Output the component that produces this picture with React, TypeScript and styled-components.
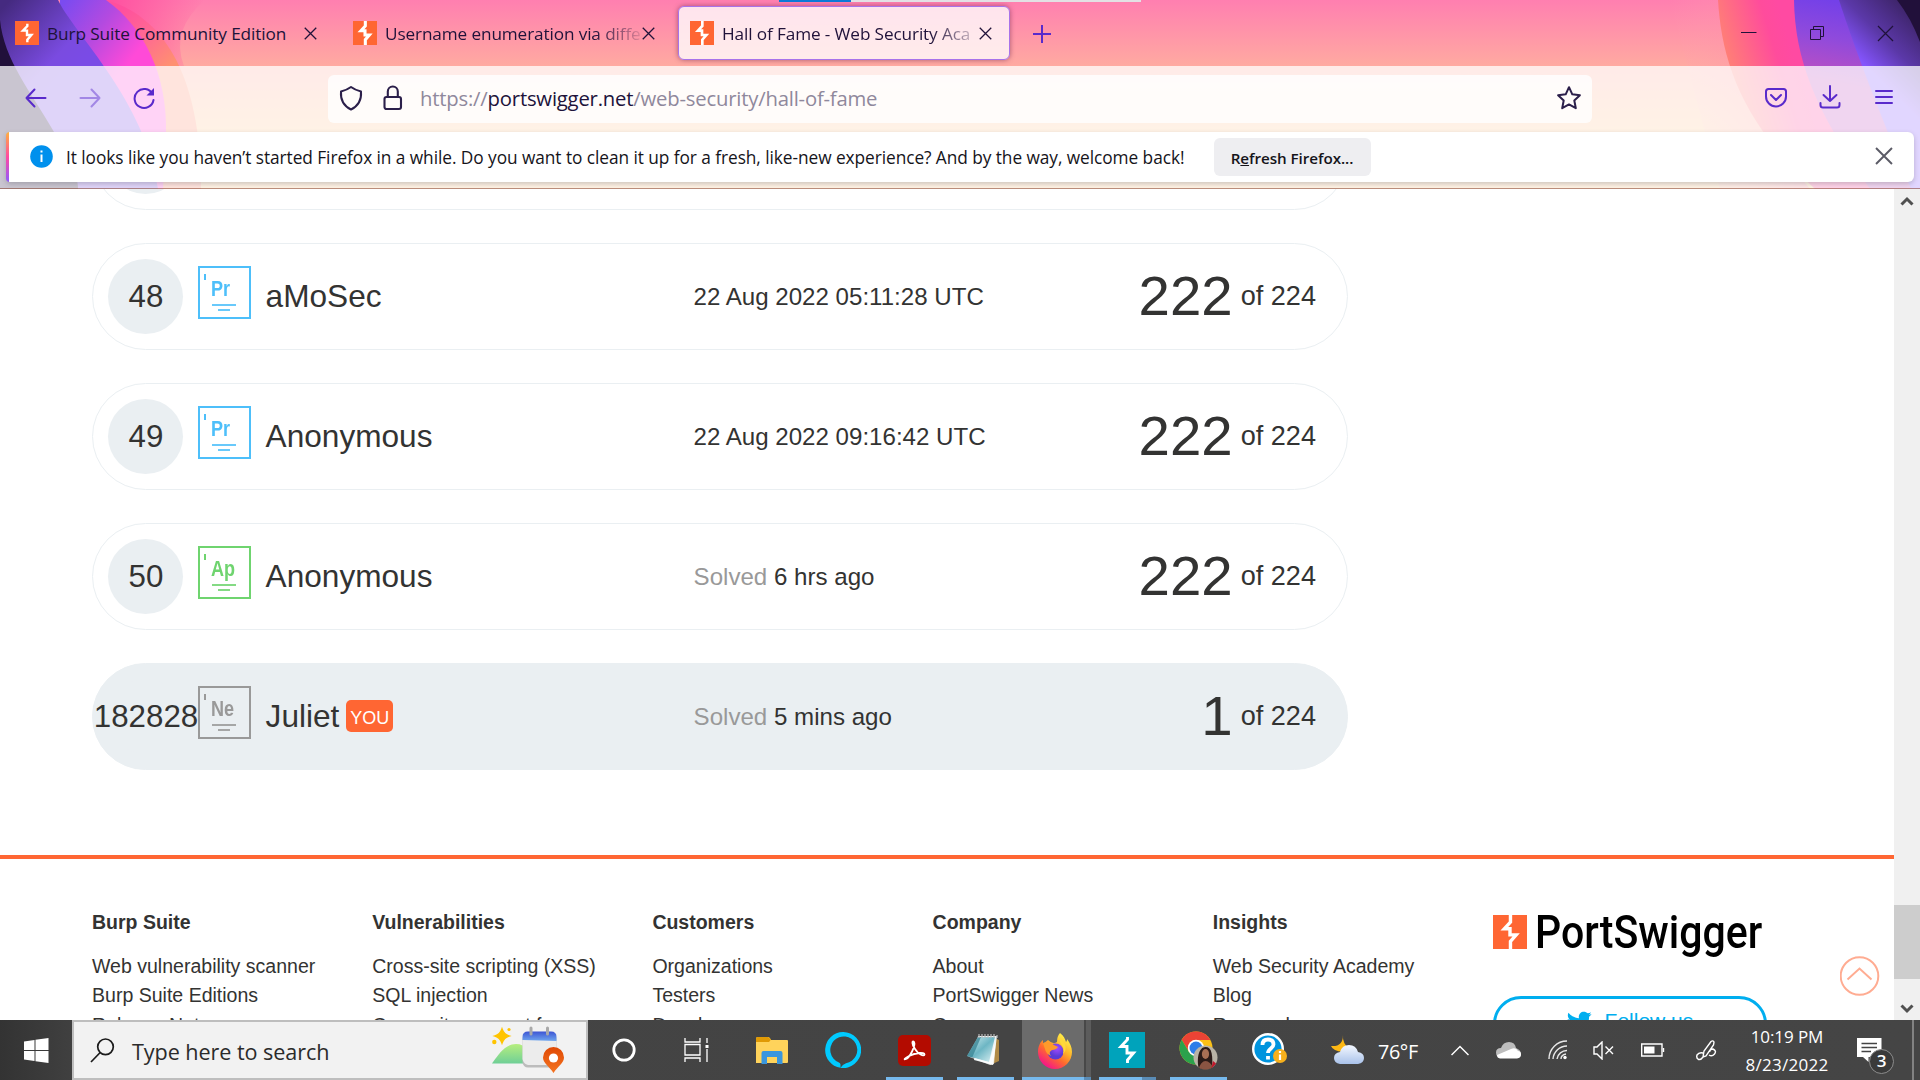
import React from "react";
import styled, { createGlobalStyle, css } from "styled-components";

const ui = `"Open Sans", "Noto Sans", sans-serif`;
const arial = `"Liberation Sans", Arial, sans-serif`;

const Global = createGlobalStyle`
  * { box-sizing: border-box; }
  html, body { margin: 0; padding: 0; background: #fff; overflow: hidden; }
  svg { display: block; flex: none; }
`;

const Screen = styled.div`
  width: 1920px;
  height: 1080px;
  display: flex;
  flex-direction: column;
  overflow: hidden;
  background: #fff;
`;

/* ---------- browser chrome ---------- */

const Chrome = styled.header`
  position: relative;
  height: 189px;
  flex: none;
  display: flex;
  flex-direction: column;
  overflow: hidden;
  font-family: ${ui};
  isolation: isolate;
`;

const ThemeArt = styled.svg`
  position: absolute;
  inset: 0;
  z-index: -1;
`;

const ShareBar = styled.div`
  position: absolute;
  left: 779px;
  top: 0;
  width: 362px;
  height: 2px;
  background: linear-gradient(90deg, #0a78d7 72px, #e3e0e4 72px);
`;

const TabStrip = styled.div`
  height: 66px;
  display: flex;
  align-items: center;
  color: #20123a;
`;

const Tab = styled.div<{ $active?: boolean; $w: number }>`
  width: ${(p) => p.$w}px;
  height: 54px;
  display: flex;
  align-items: center;
  padding: 0 0 0 15px;
  ${(p) =>
    p.$active &&
    css`
      padding-left: 11px;
      background: rgba(255, 255, 255, 0.78);
      border: 1.5px solid #a873ea;
      border-radius: 6px;
      box-shadow: 0 0 5px rgba(80, 20, 60, 0.5);
    `}
`;

const TabTitle = styled.span<{ $w: number; $fade?: boolean; $ls?: number }>`
  width: ${(p) => p.$w}px;
  margin: 2px 0 0 8px;
  white-space: nowrap;
  font-size: 17.2px;
  letter-spacing: ${(p) => p.$ls ?? 0}px;
  line-height: 26px;
  ${(p) => p.$fade && css`mask-image: linear-gradient(90deg, #000 calc(100% - 48px), rgba(0, 0, 0, 0.1));`}
`;

const NewTab = styled.div`
  margin-left: 23px;
  padding-top: 1px;
`;

const WindowButtons = styled.div`
  margin-left: auto;
  display: flex;
  gap: 52px;
  padding-right: 26px;
`;

const NavBar = styled.div`
  height: 66px;
  display: flex;
  align-items: center;
  padding: 0 24px;
  background: rgba(255, 255, 255, 0.76);
`;

const NavButtons = styled.div`
  width: 304px;
  display: flex;
  gap: 30px;
  svg { margin-top: -3px; }
`;

const UrlBox = styled.div`
  width: 1264px;
  height: 48px;
  margin-bottom: 6px;
  margin-top: 6px;
  border-radius: 6px;
  background: rgba(255, 255, 255, 0.8);
  display: flex;
  align-items: center;
  padding: 0 10px 2px;
  gap: 16px;
  color: #20123a;
`;

const Url = styled.span`
  flex: 1;
  margin-left: -2px;
  margin-top: -1px;
  font-size: 20.3px;
  letter-spacing: -0.2px;
  line-height: 28px;
  color: #8f889c;
  b { font-weight: 400; color: #20123a; }
`;

const NavTools = styled.div`
  margin-left: auto;
  display: flex;
  align-items: center;
  gap: 30px;
  padding-bottom: 2px;
`;

const NoticeArea = styled.div`
  flex: 1;
  padding: 0 6px 6px;
  background: rgba(255, 255, 255, 0.76);
  border-bottom: 1px solid rgba(123, 44, 20, 0.5);
`;

const Notice = styled.div`
  height: 50px;
  display: flex;
  align-items: center;
  border-radius: 4px 6px 6px 4px;
  overflow: hidden;
  background: linear-gradient(#ffb13d, #ff4aa2 50%, #9059ff) left / 3px 100% no-repeat #fff;
  padding: 0 21px 0 24px;
  color: #15141a;
  box-shadow: 0 2px 5px rgba(58, 57, 68, 0.25);
  svg { margin-top: -2px; }
`;

const NoticeText = styled.span`
  width: 1118px;
  margin: 0 30px 0 13px;
  white-space: nowrap;
  font-size: 17.3px;
  letter-spacing: -0.06px;
`;

const RefreshButton = styled.button`
  width: 157px;
  height: 38px;
  padding: 2px 1px 0 0;
  border: 0;
  border-radius: 6px;
  background: #eeeef1;
  color: #15141a;
  font: 600 15.2px ${ui};
  letter-spacing: -0.05px;
  margin-right: auto;
`;

/* ---------- page ---------- */

const Viewport = styled.div`
  height: 831px;
  display: flex;
  overflow: hidden;
  font-family: ${arial};
  color: #333332;
`;

const Page = styled.main`
  width: 1894px;
  height: 831px;
  overflow: hidden;
  display: flex;
  flex-direction: column;
  position: relative;
`;

const Board = styled.div`
  margin: -86px 0 0 92px;
  width: 1256px;
  flex: none;
  display: flex;
  flex-direction: column;
  gap: 33px;
`;

const BoardRow = styled.div<{ $own?: boolean }>`
  height: 107px;
  border: 1px solid #eaeff2;
  border-radius: 54px;
  background: ${(p) => (p.$own ? "#eaeff2" : "#fff")};
  display: flex;
  align-items: center;
  padding: 0 31px 0 15px;
`;

const Rank = styled.div`
  width: 75px;
  height: 75px;
  flex: none;
  border-radius: 50%;
  background: #eaeff2;
  display: flex;
  align-items: center;
  justify-content: center;
  white-space: nowrap;
  font-size: 31.3px;
  padding-left: 1px;
`;

const Level = styled.div<{ $c: string }>`
  width: 53px;
  height: 53px;
  margin: 0 14.6px 9px 15px;
  border: 2px solid ${(p) => p.$c};
  color: ${(p) => p.$c};
  display: flex;
  flex-direction: column;
  font: 700 21.5px ${arial};
`;

const LevelTick = styled.i`
  width: 2px;
  height: 6px;
  margin: 6px 0 0 4px;
  background: currentColor;
`;

const LevelCode = styled.span`
  height: 22px;
  line-height: 19px;
  margin-left: 11px;
  transform: scaleX(0.84);
  transform-origin: left;
`;

const LevelBar = styled.i<{ $w: number }>`
  width: ${(p) => p.$w}px;
  height: 2px;
  margin: 2.5px 0 0 ${(p) => 24 - p.$w / 2}px;
  background: currentColor;
  opacity: 0.85;
`;

const Player = styled.div`
  width: 428px;
  display: flex;
  align-items: center;
  gap: 7px;
  font-size: 31.6px;
`;

const You = styled.span`
  height: 32px;
  margin-top: -2px;
  padding: 3px 4px 0;
  border-radius: 5px;
  background: #ff6633;
  color: #fff;
  font-size: 18px;
  line-height: 31px;
`;

const Solved = styled.div`
  font-size: 24.1px;
  padding-top: 1px;
  color: #333332;
  span { color: #999; }
`;

const Score = styled.div`
  margin-left: auto;
  display: flex;
  align-items: center;
  gap: 8px;
  font-size: 27.1px;
  padding-bottom: 2px;
  b { font-size: 56.4px; font-weight: 400; line-height: 64px; }
`;

const Footer = styled.footer`
  margin-top: 85px;
  border-top: 4px solid #ff6633;
  display: flex;
  padding: 51px 0 0 92px;
  flex: none;
`;

const FooterCol = styled.div`
  width: 280.2px;
  display: flex;
  flex-direction: column;
  font-size: 19.55px;
  line-height: 29.6px;
  h4 { margin: -3px 0 14.5px; font-size: 19.5px; line-height: 30px; }
`;

const Brand = styled.div`
  width: 274px;
`;

const Logo = styled.div`
  display: flex;
  height: 45px;
  margin-top: 5px;
  color: #000;
`;

const LogoText = styled.span`
  margin-left: 8px;
  font: 500 46.5px/1 Roboto, sans-serif;
  transform: scaleX(0.883);
  transform-origin: left;
  margin-top: -6.5px;
`;

const Follow = styled.div`
  height: 57px;
  margin-top: 36px;
  border: 3px solid #00aeef;
  border-radius: 28px;
  color: #00aeef;
  display: flex;
  justify-content: center;
  gap: 13px;
  padding-top: 10px;
  font-size: 21px;
  svg { margin-top: 2px; }
`;

const ToTop = styled.svg`
  position: absolute;
  right: 14px;
  bottom: 24px;
`;

const ScrollBar = styled.div`
  width: 26px;
  background: #f0f0f0;
  display: flex;
  flex-direction: column;
  align-items: center;
  padding: 7px 0 6px;
`;

const Thumb = styled.div`
  width: 26px;
  height: 74px;
  background: #cdcdcd;
  margin: auto 0 25px;
`;

/* ---------- taskbar ---------- */

const TaskBar = styled.div`
  height: 60px;
  flex: none;
  display: flex;
  background: linear-gradient(90deg, #333 0, #434343 90px, #454545);
  font-family: ${ui};
  color: #fff;
`;

const StartButton = styled.div`
  width: 72px;
  display: flex;
  align-items: center;
  justify-content: center;
`;

const SearchBox = styled.div`
  width: 516px;
  border: 2px solid #bebebe;
  background: #f2f2f2;
  display: flex;
  align-items: center;
  color: #2b2b2b;
  font-size: 21.6px;
  letter-spacing: -0.07px;
  padding: 0 20px 0 16px;
  span { margin: 2px auto 0 17px; }
`;

const TaskItem = styled.div<{ $w: number; $active?: boolean }>`
  width: ${(p) => p.$w}px;
  display: flex;
  align-items: center;
  justify-content: center;
  background: ${(p) => (p.$active ? "linear-gradient(90deg,#6b6b6b 62px,#484848 62px,#484848 64px,#5c5c5c 64px)" : "none")};
`;

const Running = styled.div<{ $w: number; $split?: number; $pad?: number }>`
  width: ${(p) => p.$w}px;
  height: 60px;
  display: flex;
  align-items: center;
  justify-content: center;
  padding-right: ${(p) => p.$pad ?? 0}px;
  background: linear-gradient(90deg, #76b9ed ${(p) => p.$split ?? p.$w}px, #5a8cb6 ${(p) => p.$split ?? p.$w}px) bottom / 100% 3px no-repeat;
`;

const Tray = styled.div`
  margin-left: auto;
  width: 598px;
  display: flex;
  align-items: center;
`;

const Temp = styled.span`
  width: 42px;
  margin: 3px 31px 0 12px;
  font-size: 19.8px;
  letter-spacing: -0.4px;
  white-space: nowrap;
`;

const TrayIcon = styled.div<{ $gap: number }>`
  margin-right: ${(p) => p.$gap}px;
`;

const Clock = styled.div`
  width: 86px;
  flex: none;
  text-align: center;
  font-size: 17px;
  line-height: 28px;
  letter-spacing: -0.1px;
  white-space: nowrap;
  padding-top: 1px;
`;

const DateLine = styled.div`
  letter-spacing: 0.25px;
`;

const Alerts = styled.div`
  position: relative;
  width: 55px;
  height: 60px;
  margin-left: 27px;
  padding-top: 18px;
`;

const Badge = styled.span`
  position: absolute;
  left: 12px;
  top: 29px;
  width: 25px;
  height: 25px;
  border-radius: 50%;
  border: 1.5px solid #8c8c8c;
  background: #3a3a3a;
  font-size: 17px;
  font-weight: 600;
  line-height: 22px;
  text-align: center;
`;

const ShowDesktop = styled.div`
  width: 7px;
  height: 60px;
  border-left: 2px solid #828282;
`;

/* ---------- icons ---------- */

const Bolt = ({ size = 24, bg = "#ff6633", w = 3, inset = 0 }: { size?: number; bg?: string; w?: number; inset?: number }) => (
  <svg width={size} height={size} viewBox="0 0 36 36">
    <rect width="36" height="36" fill={bg} />
    <path
      d={`M18.5 ${inset}V7.500L12 14.500H18V21H24.500L18.500 28V${36 - inset}`}
      fill="none"
      stroke="#fff"
      strokeWidth={w}
    />
  </svg>
);

const Cross = ({ size = 13, w = 1.4, color = "#20123a" }) => (
  <svg width={size} height={size} viewBox="0 0 14 14" stroke={color} strokeWidth={w}>
    <path d="M.8.8 13.2 13.2M13.2.8.8 13.2" />
  </svg>
);

const violet = "#592acb";

const Theme = () => (
  <ThemeArt width="1920" height="189" viewBox="0 0 1920 189" preserveAspectRatio="none">
    <defs>
      <linearGradient id="sky" x1="0" y1="0" x2="0" y2="1">
        <stop offset="0" stopColor="#ff7fb0" />
        <stop offset=".35" stopColor="#ffaaa1" />
        <stop offset=".7" stopColor="#ffc994" />
        <stop offset="1" stopColor="#ffcc90" />
      </linearGradient>
      <linearGradient id="l1" gradientUnits="userSpaceOnUse" x1="10" y1="0" x2="80" y2="66">
        <stop offset="0" stopColor="#452a80" />
        <stop offset=".75" stopColor="#7a4be0" />
        <stop offset="1" stopColor="#7a4be6" />
      </linearGradient>
      <linearGradient id="l2" gradientUnits="userSpaceOnUse" x1="65" y1="0" x2="135" y2="55">
        <stop offset="0" stopColor="#7a4bf0" />
        <stop offset=".5" stopColor="#b44ae0" />
        <stop offset="1" stopColor="#ff4ad8" />
      </linearGradient>
      <linearGradient id="l3" gradientUnits="userSpaceOnUse" x1="120" y1="10" x2="170" y2="66">
        <stop offset="0" stopColor="#ff4f9e" />
        <stop offset=".5" stopColor="#ff6a92" />
        <stop offset="1" stopColor="#ff9070" />
      </linearGradient>
      <linearGradient id="glow">
        <stop offset="0" stopColor="#ff4fa0" />
        <stop offset="1" stopColor="#ff4fa0" stopOpacity="0" />
      </linearGradient>
      <linearGradient id="glowR">
        <stop offset="0" stopColor="#ff9fb4" stopOpacity="0" />
        <stop offset="1" stopColor="#ff86a0" />
      </linearGradient>
      <linearGradient id="r1" gradientUnits="userSpaceOnUse" x1="1720" y1="45" x2="1785" y2="25">
        <stop offset="0" stopColor="#ff8274" />
        <stop offset=".75" stopColor="#ff4c9c" />
        <stop offset="1" stopColor="#ff4aa2" />
      </linearGradient>
      <linearGradient id="r2" gradientUnits="userSpaceOnUse" x1="1830" y1="0" x2="1815" y2="80">
        <stop offset="0" stopColor="#7440e8" />
        <stop offset=".45" stopColor="#8f4adc" />
        <stop offset="1" stopColor="#c050c0" />
      </linearGradient>
      <linearGradient id="r3" gradientUnits="userSpaceOnUse" x1="1915" y1="15" x2="1865" y2="65">
        <stop offset="0" stopColor="#3d2468" />
        <stop offset=".55" stopColor="#5b38a8" />
        <stop offset="1" stopColor="#8454fc" />
      </linearGradient>
    </defs>
    <rect width="1920" height="189" fill="url(#sky)" />
    <path d="M106 0H205Q170 30 184 66H120Z" fill="url(#glow)" />
    <path d="M106 0C160 15 201 70 201 189H100Z" fill="url(#l3)" />
    <path d="M106 0C145 28 167 75 166 132L163 189H60V0Z" fill="url(#l2)" />
    <path d="M0 0H58C75 35 145 100 158 189H0Z" fill="url(#l1)" />
    <path d="M0 20C4 60 30 90 54 132 70 160 78 175 78 189H0Z" fill="#21103a" />
    <path d="M1670 0H1720C1722 60 1755 120 1810 189H1720Z" fill="url(#glowR)" opacity=".8" />
    <path d="M1718 0C1721 50 1735 105 1790 165L1815 189H1920V0Z" fill="url(#r1)" />
    <path d="M1794 0C1795 60 1815 110 1870 189H1920V0Z" fill="url(#r2)" />
    <path d="M1839 0C1852 40 1870 90 1911 189H1920V0Z" fill="url(#r3)" />
    <path d="M1897 0Q1911 18 1920 42V0Z" fill="#21103a" />
  </ThemeArt>
);

const SearchArt = () => (
  <svg width="74" height="48" viewBox="0 0 74 48">
    <defs>
      <linearGradient id="hill" x1="0" y1="0" x2="0" y2="1"><stop stopColor="#b6ee7e" /><stop offset="1" stopColor="#6fcf97" /></linearGradient>
      <linearGradient id="cal" x1="0" y1="0" x2="0" y2="1"><stop stopColor="#3d55d4" /><stop offset="1" stopColor="#6fa6ee" /></linearGradient>
      <linearGradient id="pin" x1="0" y1="0" x2="0" y2="1"><stop stopColor="#e04a05" /><stop offset="1" stopColor="#f47421" /></linearGradient>
    </defs>
    <path d="M10 3Q12 8.500 17 10 12 11.500 10 17 8 11.500 3 10 8 8.500 10 3Z" fill="#ffc400" stroke="#ffc400" strokeWidth="1.500" />
    <circle cx="17" cy="3.500" r="1.600" fill="#ffc400" /><circle cx="2.300" cy="16" r="2.200" fill="#ffc400" />
    <path d="M0 37.500C7 27 14 18 24 18S38 26 43 37.500Z" fill="url(#hill)" />
    <rect x="30.500" y="8" width="34" height="33.500" rx="5.500" fill="#bcbcbc" />
    <path d="M30.500 14H64.500V34Q64.500 39 59.500 39H36Q31.500 38 30.500 33Z" fill="#ececec" />
    <path d="M30.500 14V11Q30.500 5.500 36 5.500H59Q64.500 5.500 64.500 11V15Z" fill="url(#cal)" />
    <path d="M39 2V8M55.500 2V8" stroke="#a9a9a9" strokeWidth="3" strokeLinecap="round" />
    <path d="M61.500 47C57 40 51 37 51 31.500A10.500 10.500 0 0 1 72 31.500C72 37 66 40 61.500 47Z" fill="url(#pin)" />
    <circle cx="61.500" cy="32" r="4.600" fill="#fff" />
  </svg>
);

const Firefox = () => (
  <svg width="36" height="37" viewBox="0 0 36 37">
    <defs>
      <linearGradient id="ff" x1=".85" y1=".1" x2=".25" y2=".95">
        <stop stopColor="#fff24a" /><stop offset=".35" stopColor="#ffb52a" /><stop offset=".62" stopColor="#ff6a2e" /><stop offset="1" stopColor="#f5138a" />
      </linearGradient>
      <radialGradient id="ffc" cx=".6" cy=".3"><stop stopColor="#a44bff" /><stop offset="1" stopColor="#5a3bd6" /></radialGradient>
    </defs>
    <path d="M23 1C27 4 28 7 29 10 30 9 30 8 30 7 33 11 35 15 35 20A17 17 0 0 1 1 20C1 15 3 10 6 8V12L11 8Q16 13 20 10 20 4 23 1Z" fill="url(#ff)" />
    <circle cx="18.500" cy="19.500" r="8" fill="url(#ffc)" />
    <path d="M6 11Q12 8 17 13L21 15Q19 18 15 18 11 20 14 24 9 22 8 17Z" fill="#ff9a2b" />
    <path d="M24 12Q28 16 26 22 30 18 28 12 25 8 23 5 22 9 24 12Z" fill="#ffd93a" />
  </svg>
);

const ChromeIcon = () => (
  <svg width="39" height="39" viewBox="0 0 39 39">
    <circle cx="17" cy="17" r="16.500" fill="#fbc116" />
    <path d="M2.700 8.800A16.500 16.500 0 0 1 31.500 9H17A8 8 0 0 0 9.500 20Z" fill="#ea4335" />
    <path d="M2.700 8.800A16.500 16.500 0 0 0 17 33.500L24 21 10 21Z" fill="#2ba24c" />
    <circle cx="17" cy="17" r="8.200" fill="#fff" />
    <circle cx="17" cy="17" r="6.500" fill="#2b7de9" />
    <clipPath id="av"><circle cx="26.500" cy="26.500" r="12" /></clipPath>
    <g clipPath="url(#av)">
      <rect x="14" y="14" width="25" height="25" fill="#b9b3a6" />
      <path d="M20 39C17 27 20 16 26.500 16S34 24 33 39Z" fill="#2b1b18" />
      <ellipse cx="26.500" cy="23" rx="3.600" ry="5" fill="#a86f54" />
      <path d="M19 39Q22 30 26.500 30T36 39Z" fill="#8a5442" />
      <path d="M32 39 34 30 39 34V39Z" fill="#c0182c" />
    </g>
  </svg>
);

const Notepad = () => (
  <svg width="34" height="34" viewBox="0 0 34 34">
    <defs><linearGradient id="np" x1="0" y1="0" x2="1" y2="1"><stop stopColor="#d8f0f2" /><stop offset=".5" stopColor="#6db6c4" /><stop offset="1" stopColor="#dff3f5" /></linearGradient></defs>
    <path d="M29 5 33 7V28L24 32Z" fill="#b08a45" />
    <path d="M12 3H31L27 32 8 27Z" fill="#eef3f3" />
    <path d="M12 4H29L23 29 1 23Z" fill="url(#np)" />
    <path d="M1 23 12 4 15 4 6 25Z" fill="#327f8f" opacity=".7" />
    <path d="M13 1V5M16 1V5M19 1V5M22 1V5M25 1V5M28 1V5M31 2V5" stroke="#b9b9b9" strokeWidth="1.200" />
    <path d="M23 29 1 23 24 32 28 31 30 8Z" fill="#fff" opacity=".75" />
  </svg>
);

/* ---------- data ---------- */

type Entry = { rank: string; code: string; color: string; name: string; you?: boolean; solved?: boolean; when: string; score: string };

const entries: Entry[] = [
  { rank: "48", code: "Pr", color: "#4dbffa", name: "aMoSec", when: "22 Aug 2022 05:11:28 UTC", score: "222" },
  { rank: "49", code: "Pr", color: "#4dbffa", name: "Anonymous", when: "22 Aug 2022 09:16:42 UTC", score: "222" },
  { rank: "50", code: "Ap", color: "#6fd46f", name: "Anonymous", solved: true, when: "6 hrs ago", score: "222" },
  { rank: "182828", code: "Ne", color: "#999999", name: "Juliet", you: true, solved: true, when: "5 mins ago", score: "1" },
];

const columns = [
  { title: "Burp Suite", links: ["Web vulnerability scanner", "Burp Suite Editions", "Release Notes"] },
  { title: "Vulnerabilities", links: ["Cross-site scripting (XSS)", "SQL injection", "Cross-site request forgery"] },
  { title: "Customers", links: ["Organizations", "Testers", "Developers"] },
  { title: "Company", links: ["About", "PortSwigger News", "Careers"] },
  { title: "Insights", links: ["Web Security Academy", "Blog", "Research"] },
];

const BrowserChrome = () => (
  <Chrome>
    <Theme />
    <ShareBar />
    <TabStrip>
      <Tab $w={338}>
        <Bolt w={3.6} inset={4} />
        <TabTitle $w={257} $ls={-0.08}>Burp Suite Community Edition</TabTitle>
        <Cross />
      </Tab>
      <Tab $w={340}>
        <Bolt w={4.6} />
        <TabTitle $w={257} $fade $ls={-0.12}>Username enumeration via diffe</TabTitle>
        <Cross />
      </Tab>
      <Tab $w={332} $active>
        <Bolt w={4} />
        <TabTitle $w={257} $fade $ls={-0.12}>Hall of Fame - Web Security Aca</TabTitle>
        <Cross />
      </Tab>
      <NewTab>
        <svg width="18" height="18" stroke={violet} strokeWidth="2"><path d="M0 9H18M9 0V18" /></svg>
      </NewTab>
      <WindowButtons>
        <svg width="16" height="16" stroke="#20123a"><path d="M0 7.500H15.500" /></svg>
        <svg width="16" height="16" stroke="#20123a" fill="none"><path d="M1.500 4.500H11.500V14.500H1.500ZM4.500 4V1.500H14.500V11.500H12" /></svg>
        <Cross size={17} w={1} />
      </WindowButtons>
    </TabStrip>
    <NavBar>
      <NavButtons>
        <svg width="24" height="24" fill="none" stroke={violet} strokeWidth="2" strokeLinecap="round" strokeLinejoin="round"><path d="M21.500 12H2.500M10.500 3.500 2.500 12 10.500 20.500" /></svg>
        <svg width="24" height="24" fill="none" stroke={violet} strokeOpacity=".45" strokeWidth="2" strokeLinecap="round" strokeLinejoin="round"><path d="M2.500 12H21.500M13.500 3.500 21.500 12 13.500 20.500" /></svg>
        <svg width="24" height="24" fill="none" stroke={violet} strokeWidth="2" strokeLinecap="round"><path d="M20.500 8A9.500 9.500 0 1 0 21.500 14" /><path d="M22 2V9.500H14.500Z" fill={violet} stroke="none" /></svg>
      </NavButtons>
      <UrlBox>
        <svg width="26" height="26" fill="none" stroke="#2b1f4a" strokeWidth="2" strokeLinejoin="round"><path d="M13 2Q17 5 23 6.500 24 19 13 24.500 2 19 3 6.500 9 5 13 2Z" /></svg>
        <svg width="26" height="26" fill="none" stroke="#2b1f4a" strokeWidth="2.100"><rect x="4.500" y="12" width="16.500" height="12" rx="2" /><path d="M7.800 12V6.500A5 5 0 0 1 17.800 6.500V12" /></svg>
        <Url>https://<b>portswigger.net</b>/web-security/hall-of-fame</Url>
        <svg width="26" height="26" fill="none" stroke="#2b1f4a" strokeWidth="2" strokeLinejoin="round"><path d="M13 2.200 16.300 9.300 23.900 10.200 18.300 15.500 19.800 23.200 13 19.400 6.200 23.200 7.700 15.500 2.100 10.200 9.700 9.300Z" /></svg>
      </UrlBox>
      <NavTools>
        <svg width="24" height="24" fill="none" stroke={violet} strokeWidth="2" strokeLinecap="round" strokeLinejoin="round"><path d="M4.500 3H19.500Q22 3 22 5.500V10.500A10 10 0 0 1 2 10.500V5.500Q2 3 4.500 3ZM7 9 12 14 17 9" /></svg>
        <svg width="24" height="26" fill="none" stroke={violet} strokeWidth="2" strokeLinecap="round" strokeLinejoin="round"><path d="M12 1V16M5.500 10 12 16 18.500 10M2.500 18V20Q2.500 22.500 5 22.500H19Q21.500 22.500 21.500 20V18" /></svg>
        <svg width="24" height="22" stroke={violet} strokeWidth="2" strokeLinecap="round"><path d="M4 4H20M4 10H20M4 16H20" /></svg>
      </NavTools>
    </NavBar>
    <NoticeArea>
      <Notice>
        <svg width="23" height="23"><circle cx="11.500" cy="11.500" r="11.300" fill="#0090ed" /><path d="M11.500 9.500V17M11.500 5.500V7.500" stroke="#fff" strokeWidth="2" /></svg>
        <NoticeText>It looks like you haven’t started Firefox in a while. Do you want to clean it up for a fresh, like-new experience? And by the way, welcome back!</NoticeText>
        <RefreshButton>R<u>e</u>fresh Firefox...</RefreshButton>
        <Cross size={18} w={1.5} color="#5b5b66" />
      </Notice>
    </NoticeArea>
  </Chrome>
);

const Leaderboard = () => (
  <Board>
    <BoardRow><Rank /></BoardRow>
    {entries.map((e) => (
      <BoardRow key={e.rank} $own={e.you}>
        <Rank>{e.rank}</Rank>
        <Level $c={e.color}>
          <LevelTick />
          <LevelCode>{e.code}</LevelCode>
          <LevelBar $w={24} />
          <LevelBar $w={12} />
        </Level>
        <Player>{e.name}{e.you && <You>YOU</You>}</Player>
        <Solved>{e.solved && <span>Solved </span>}{e.when}</Solved>
        <Score><b>{e.score}</b>of 224</Score>
      </BoardRow>
    ))}
  </Board>
);

const Taskbar = () => (
  <TaskBar>
    <StartButton>
      <svg width="25" height="25" fill="#fff"><path d="M0 3.500 10.500 2V12H0ZM11.500 1.800 24.500 0V12H11.500ZM0 13H10.500V23L0 21.500ZM11.500 13H24.500V25L11.500 23.200Z" /></svg>
    </StartButton>
    <SearchBox>
      <svg width="25" height="25" fill="none" stroke="#1b1b1b" strokeWidth="1.700"><circle cx="15.500" cy="8.800" r="7.800" /><path d="M10.200 14.500 1 24" /></svg>
      <span>Type here to search</span>
      <SearchArt />
    </SearchBox>
    <TaskItem $w={72}>
      <svg width="24" height="24"><circle cx="12" cy="12" r="10.200" fill="none" stroke="#fff" strokeWidth="2.800" /></svg>
    </TaskItem>
    <TaskItem $w={72}>
      <svg width="25" height="24" fill="none" stroke="#fff" strokeWidth="1.300"><path d="M1 0V4H16V0M1 6.500H16V17H1ZM1 24V20H16V24M23 0V5M23 11V24" /><rect x="21.500" y="7" width="3" height="3" fill="#fff" stroke="none" /></svg>
    </TaskItem>
    <TaskItem $w={80}>
      <svg width="32" height="27"><path d="M0 1.500Q0 0 1.500 0H12Q14 0 15 3H31Q32 3 32 4V25Q32 26 31 26H0Z" fill="#ffd35b" /><path d="M0 1.500Q0 0 1.500 0H12L15 2.500 13 5H0Z" fill="#e09a05" /><path d="M5.500 26V16Q5.500 14 7.500 14H24.500Q26.500 14 26.500 16V27H21V20H11V27H5.500Z" fill="#3a96dd" /></svg>
    </TaskItem>
    <TaskItem $w={62}>
      <svg width="36" height="36"><path fillRule="evenodd" d="M18 0A18 18 0 1 1 15.500 35.800V32.500Q15.500 31 13.500 30.300A13.500 13.500 0 1 1 21 31.200Q17.500 32.500 15.500 35.800A18 18 0 0 1 18 0Z" fill="#00caff" /></svg>
    </TaskItem>
    <TaskItem $w={12} />
    <Running $w={57}>
      <svg width="33" height="31" viewBox="0 0 33 31"><rect width="33" height="31" rx="5" fill="#b30b00" /><path d="M7.500 24C12 23 18 10 16 7 14 5 13.500 9 17 14 20 19 26 22 26.500 19.500 26.500 17 18 17.500 11 21 6 23.500 6 25 7.500 24Z" fill="none" stroke="#fff" strokeWidth="1.800" /></svg>
    </Running>
    <TaskItem $w={14} />
    <Running $w={57} $pad={5}><Notepad /></Running>
    <TaskItem $w={8} />
    <TaskItem $w={69} $active>
      <Running $w={69} $split={62} $pad={4}><Firefox /></Running>
    </TaskItem>
    <TaskItem $w={8} />
    <Running $w={57} $split={43} $pad={2}><Bolt size={36} bg="#00a3bb" w={2.9} inset={5} /></Running>
    <TaskItem $w={14} />
    <Running $w={57}><ChromeIcon /></Running>
    <TaskItem $w={85}>
      <svg width="36" height="34"><circle cx="16" cy="16" r="14.800" fill="#0094de" stroke="#fff" strokeWidth="2.400" /><path d="M10.500 12Q10.500 6.500 16 6.500T21.500 11.500C21.500 15.500 16 15.500 16 20M16 23V26.500" fill="none" stroke="#fff" strokeWidth="3.800" /><circle cx="28" cy="23" r="7" fill="#f6b01c" /><path d="M28 21.500V27M28 18V20" stroke="#fff" strokeWidth="2.200" /></svg>
    </TaskItem>
    <Tray>
      <svg width="44" height="31" viewBox="-9 1 44 31"><defs><linearGradient id="wc" x1="0" y1="0" x2="0" y2="1"><stop stopColor="#f4f8ff" /><stop offset="1" stopColor="#a9c2ea" /></linearGradient></defs><path d="M12 1Q11 9 19 16L12 18Q2 17 0 12 12 13 12 1Z" fill="#fdb813" /><path d="M9 30Q3 29 3 24T9 18Q11 11 18 11T27 18Q33 19 33 24T27 30Z" fill="url(#wc)" /></svg>
      <Temp>76°F</Temp>
      <TrayIcon $gap={27}><svg width="18" height="11" fill="none" stroke="#fff" strokeWidth="1.500"><path d="M.5 10 9 1.500 17.500 10" /></svg></TrayIcon>
      <TrayIcon $gap={27}><svg width="25" height="17"><path d="M5 16Q0 15 0 10.500T5 6Q7 0 13 0T20 6Q25 8 25 12T20 16Z" fill="#bdbdbd" /><path d="M4 16.500Q1 16 1 13L15 7Q20 5 22 9 25 9 25 12.500T21 16.500Z" fill="#fff" /></svg></TrayIcon>
      <TrayIcon $gap={25}><svg width="20" height="20" fill="none" stroke="#e8e8e8" strokeWidth="1.400"><path d="M1 19A18 18 0 0 1 19 1M5 19A14 14 0 0 1 19 6M9 19A10 10 0 0 1 19 10.500M13 19Q13 15 18 14" /><circle cx="17" cy="17.500" r="1.700" fill="#fff" stroke="none" /></svg></TrayIcon>
      <TrayIcon $gap={27}><svg width="21" height="19" fill="none" stroke="#fff" strokeWidth="1.400"><path d="M1 6H4L9 1V18L4 13H1ZM12.500 5.500 20 13M20 5.500 12.500 13" /></svg></TrayIcon>
      <TrayIcon $gap={31}><svg width="24" height="14" fill="none" stroke="#fff" strokeWidth="1.400"><path d="M.7 1H21V13H.7Z" /><path d="M22.500 5V9" /><path d="M3 3.500H13.500V10.500H3Z" fill="#fff" stroke="none" /></svg></TrayIcon>
      <TrayIcon $gap={27}><svg width="21" height="21" fill="none" stroke="#fff" strokeWidth="1.400"><path d="M7 17 8 11 15 1.500Q17 0 18 2L17.500 5 10 16ZM7 17Q5 20 2.500 19.500 0 18 1 15 3 12 7 13M13 15Q16 17 18.500 14T17 9Q14 9 13.500 12" /></svg></TrayIcon>
      <Clock>10:19 PM<DateLine>8/23/2022</DateLine></Clock>
      <Alerts>
        <svg width="25" height="25"><path d="M0 0H24.500V19H11.500V24L6 19H0Z" fill="#fff" /><path d="M4.500 5.500H20M4.500 9.500H20M4.500 13.500H14" stroke="#444" strokeWidth="1.300" /></svg>
        <Badge>3</Badge>
      </Alerts>
      <ShowDesktop />
    </Tray>
  </TaskBar>
);

export default function App() {
  return (
    <Screen>
      <Global />
      <BrowserChrome />
      <Viewport>
        <Page>
          <Leaderboard />
          <Footer>
            {columns.map((c) => (
              <FooterCol key={c.title}>
                <h4>{c.title}</h4>
                {c.links.map((l) => <span key={l}>{l}</span>)}
              </FooterCol>
            ))}
            <Brand>
              <Logo>
                <Bolt size={34} w={3.6} />
                <LogoText>PortSwigger</LogoText>
              </Logo>
              <Follow>
                <svg width="25" height="22" viewBox="0 0 24 20" fill="#00aeef"><path d="M23.600 2.400C22.800 2.800 21.800 3 20.900 3.200 21.900 2.600 22.600 1.700 23 .6 22 1.100 21 1.500 19.900 1.700 18 -.4 14.600-.5 12.700 1.500 11.500 2.800 11 4.600 11.500 6.300 7.500 6.100 3.900 4.200 1.400 1.200.2 3.500.8 6.300 2.900 7.800 2.100 7.800 1.400 7.500.7 7.200 .7 9.500 2.400 11.500 4.600 12 3.900 12.200 3.200 12.200 2.400 12.100 3 14 4.900 15.400 7 15.500 5 17 2.500 17.700 0 17.400 9.800 23.500 21.300 16.700 21.200 4.900 22.100 4.200 23 3.400 23.600 2.400Z" /></svg>
                Follow us
              </Follow>
            </Brand>
          </Footer>
          <ToTop width="40" height="40" fill="none" stroke="#ffac92" strokeWidth="2"><circle cx="19.500" cy="20" r="18.800" /><path d="M7.500 23.500 19.500 12.500 31.500 23.500" /></ToTop>
        </Page>
        <ScrollBar>
          <svg width="14" height="10" fill="none" stroke="#505050" strokeWidth="3"><path d="M1.500 8.500 7 3 12.500 8.500" /></svg>
          <Thumb />
          <svg width="14" height="10" fill="none" stroke="#505050" strokeWidth="3"><path d="M1.500 1.500 7 7 12.500 1.500" /></svg>
        </ScrollBar>
      </Viewport>
      <Taskbar />
    </Screen>
  );
}
